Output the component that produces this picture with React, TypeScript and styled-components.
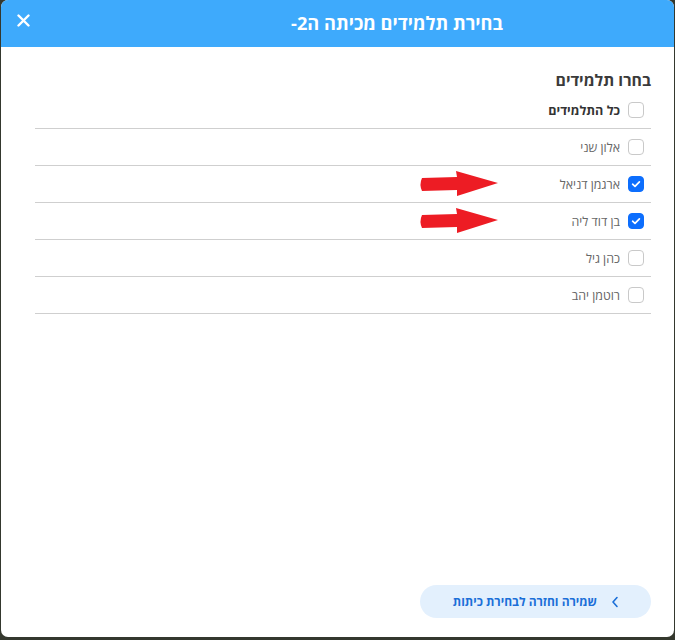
import React, { useState } from "react";
import styled, { createGlobalStyle } from "styled-components";

const GlobalStyle = createGlobalStyle`
  html, body {
    margin: 0;
    padding: 0;
    background: #34382e;
  }
  * {
    box-sizing: border-box;
  }
`;

const students = [
  { name: "אלון שני", checked: false, marked: false },
  { name: "ארגמן דניאל", checked: true, marked: true },
  { name: "בן דוד ליה", checked: true, marked: true },
  { name: "כהן גיל", checked: false, marked: false },
  { name: "רוטמן יהב", checked: false, marked: false },
];

function CheckIcon() {
  return (
    <svg width="10" height="10" viewBox="0 0 10 10">
      <path
        d="M1.6 5.2 L4 7.4 L8.4 2.8"
        fill="none"
        stroke="#fff"
        strokeWidth="1.7"
        strokeLinecap="round"
        strokeLinejoin="round"
      />
    </svg>
  );
}

function RedArrow() {
  return (
    <svg width="80" height="26" viewBox="0 0 80 26">
      <path
        d="M3 7 L38 6 L37 0 L79 12 L38 25 L38 19 L3 20 Q0 13.5 3 7 Z"
        fill="#ed1c24"
      />
    </svg>
  );
}

function App() {
  const [list, setList] = useState(students);
  const all = list.every((s) => s.checked);

  return (
    <>
      <GlobalStyle />
      <Modal dir="rtl">
        <Header>
          <Title>בחירת תלמידים מכיתה ה2-</Title>
          <CloseButton aria-label="close">
            <svg width="13" height="13" viewBox="0 0 13 13">
              <path
                d="M1.5 1.5 L11.5 11.5 M11.5 1.5 L1.5 11.5"
                stroke="#fff"
                strokeWidth="2.4"
                strokeLinecap="round"
              />
            </svg>
          </CloseButton>
        </Header>
        <Body>
          <Heading>בחרו תלמידים</Heading>
          <List>
            <Row>
              <Box
                $checked={all}
                onClick={() =>
                  setList(list.map((s) => ({ ...s, checked: !all })))
                }
              >
                {all && <CheckIcon />}
              </Box>
              <Label $bold>כל התלמידים</Label>
            </Row>
            {list.map((s, i) => (
              <Row key={i}>
                <Box
                  $checked={s.checked}
                  onClick={() =>
                    setList(
                      list.map((x, j) =>
                        j === i ? { ...x, checked: !x.checked } : x
                      )
                    )
                  }
                >
                  {s.checked && <CheckIcon />}
                </Box>
                <Label>{s.name}</Label>
                {s.marked && (
                  <Marker>
                    <RedArrow />
                  </Marker>
                )}
              </Row>
            ))}
          </List>
          <Footer>
            <SaveButton>
              <svg width="8" height="12" viewBox="0 0 8 12">
                <path
                  d="M6 1.5 L2 6 L6 10.5"
                  fill="none"
                  stroke="#1b6fd8"
                  strokeWidth="1.6"
                  strokeLinecap="round"
                  strokeLinejoin="round"
                />
              </svg>
              <span>שמירה וחזרה לבחירת כיתות</span>
            </SaveButton>
          </Footer>
        </Body>
      </Modal>
    </>
  );
}

const Modal = styled.div`
  margin-left: 1px;
  width: 673px;
  height: 637px;
  background: #fff;
  border-radius: 7px;
  overflow: hidden;
  display: flex;
  flex-direction: column;
  font-family: "Open Sans", "DejaVu Sans", "Liberation Sans", sans-serif;
`;

const Header = styled.div`
  height: 47px;
  flex-shrink: 0;
  background: #3eaafc;
  display: flex;
  align-items: center;
  padding: 0 171px 0 14px;
`;

const Title = styled.h1`
  margin: 0;
  color: #fff;
  font-size: 18.2px;
  font-weight: 700;
  line-height: 1;
`;

const CloseButton = styled.button`
  margin-right: auto;
  background: none;
  border: none;
  padding: 0;
  width: 16px;
  height: 16px;
  display: flex;
  align-items: center;
  justify-content: center;
  cursor: pointer;
  transform: translateY(-3px);
`;

const Body = styled.div`
  flex: 1;
  display: flex;
  flex-direction: column;
  padding: 23px 23px 19px 34px;
`;

const Heading = styled.h2`
  margin: 0 0 2px;
  font-size: 15.8px;
  font-weight: 700;
  color: #3a3a3a;
  line-height: 20px;
`;

const List = styled.div`
  display: flex;
  flex-direction: column;
`;

const Row = styled.div`
  position: relative;
  height: 37px;
  display: flex;
  align-items: center;
  gap: 8px;
  padding-right: 7px;
  border-bottom: 1px solid #cfcfcf;
`;

const Box = styled.span<{ $checked: boolean }>`
  width: 16px;
  height: 16px;
  border-radius: 4px;
  border: 1px solid ${(p) => (p.$checked ? "#0d6efd" : "#c9c9c9")};
  background: ${(p) => (p.$checked ? "#0d6efd" : "#fff")};
  display: flex;
  align-items: center;
  justify-content: center;
  cursor: pointer;
`;

const Label = styled.span<{ $bold?: boolean }>`
  font-size: ${(p) => (p.$bold ? "12.6px" : "12.4px")};
  color: ${(p) => (p.$bold ? "#333" : "#666")};
  font-weight: ${(p) => (p.$bold ? 700 : 400)};
`;

const Marker = styled.span`
  position: absolute;
  left: 384px;
  top: 50%;
  transform: translateY(-50%);
  display: flex;
`;

const Footer = styled.div`
  margin-top: auto;
  display: flex;
`;

const SaveButton = styled.button`
  width: 231px;
  height: 33px;
  border: none;
  border-radius: 17px;
  background: #e3f0fd;
  color: #1b6fd8;
  font-family: inherit;
  font-size: 12px;
  font-weight: 700;
  display: flex;
  align-items: center;
  gap: 14px;
  padding: 0 32px 0 0;
  cursor: pointer;
`;

export default App;
